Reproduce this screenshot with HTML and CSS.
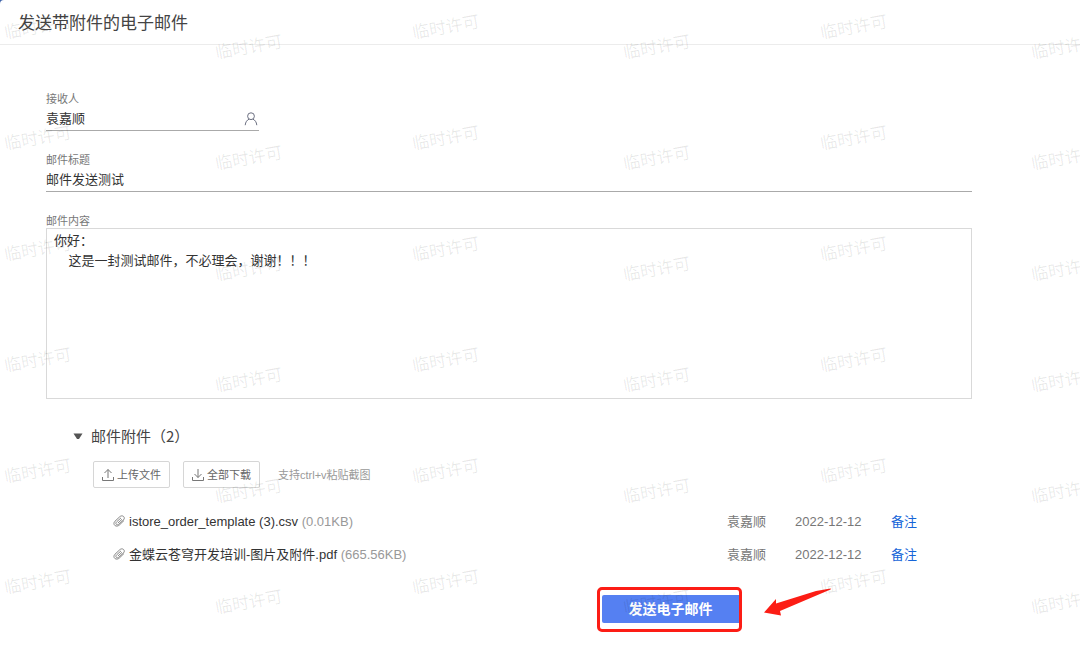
FILE: index.html
```html
<!DOCTYPE html>
<html lang="zh-CN">
<head>
<meta charset="utf-8">
<meta name="viewport" content="width=device-width, initial-scale=1">
<title>发送带附件的电子邮件</title>
<link rel="stylesheet" href="styles.css">
</head>
<body>
<div class="page">
  <header class="header"><h1 class="title">发送带附件的电子邮件</h1></header>
  <form class="form">
    <div class="field field-short">
      <label class="label" for="to">接收人</label>
      <div class="control">
        <input class="input" id="to" type="text" value="袁嘉顺">
        <svg class="person" viewBox="0 0 14 14" aria-hidden="true"><circle cx="7" cy="4.2" r="3.4"/><path d="M1.200 13.200C1.500 10 3 8 5.200 7.100M12.800 13.200C12.500 10 11 8 8.800 7.100"/></svg>
      </div>
    </div>
    <div class="field">
      <label class="label" for="subject">邮件标题</label>
      <div class="control"><input class="input" id="subject" type="text" value="邮件发送测试"></div>
    </div>
    <div class="field">
      <label class="label" for="content">邮件内容</label>
      <textarea class="textarea" id="content">你好：
    这是一封测试邮件，不必理会，谢谢！！！</textarea>
    </div>
    <section class="attachments">
      <h2 class="section-title"><svg class="caret" viewBox="0 0 10 7" aria-hidden="true"><path d="M.5.500h9L6 6H4z"/></svg>邮件附件（2）</h2>
      <div class="toolbar">
        <button class="tool" type="button"><svg class="tool-icon" viewBox="0 0 14 14" aria-hidden="true"><path d="M7 10V1.500M3.500 5L7 1.500L10.500 5M1.500 9v3.500h11V9"/></svg>上传文件</button>
        <button class="tool" type="button"><svg class="tool-icon" viewBox="0 0 14 14" aria-hidden="true"><path d="M7 1v8.500M3.500 6L7 9.500L10.500 6M1.500 9v3.500h11V9"/></svg>全部下载</button>
        <span class="hint">支持ctrl+v粘贴截图</span>
      </div>
      <table class="files">
        <tbody>
          <tr>
            <td class="file"><svg class="clip" viewBox="0 0 12 12" aria-hidden="true"><path d="M11 5.500L6.500 9.900C5.100 11.200 3.200 11.600 1.800 10.400C.500 9.200.7 7.500 2 6.200L6.800 1.700C7.900.700 9.600.500 10.600 1.500C11.600 2.500 11.500 3.900 10.500 4.900L5.900 9.200C5.100 9.900 4 10 3.300 9.300C2.600 8.600 2.800 7.600 3.600 6.900L8 2.900M4.900 8.100L9 4.300"/></svg>istore_order_template (3).csv <span class="size">(0.01KB)</span></td>
            <td class="owner">袁嘉顺</td><td class="date">2022-12-12</td><td class="action"><a class="link" href="#">备注</a></td>
          </tr>
          <tr>
            <td class="file"><svg class="clip" viewBox="0 0 12 12" aria-hidden="true"><path d="M11 5.500L6.500 9.900C5.100 11.200 3.200 11.600 1.800 10.400C.500 9.200.7 7.500 2 6.200L6.800 1.700C7.900.700 9.600.500 10.600 1.500C11.600 2.500 11.500 3.900 10.500 4.900L5.900 9.200C5.100 9.900 4 10 3.300 9.300C2.600 8.600 2.800 7.600 3.600 6.900L8 2.900M4.900 8.100L9 4.300"/></svg>金蝶云苍穹开发培训-图片及附件.pdf <span class="size">(665.56KB)</span></td>
            <td class="owner">袁嘉顺</td><td class="date">2022-12-12</td><td class="action"><a class="link" href="#">备注</a></td>
          </tr>
        </tbody>
      </table>
    </section>
    <div class="submit-row">
      <div class="highlight"><button class="submit" type="button">发送电子邮件</button></div>
      <svg class="arrow" viewBox="0 0 68 30" aria-hidden="true"><path d="M0 25.500L12 12L12 16.500L52 4L66.500 1.500Q67.500 2 66.500 2.500L16 24L17 28.500z"/></svg>
    </div>
  </form>
  <div class="watermarks" aria-hidden="true">
    <span class="mark">临时许可</span><span class="mark">临时许可</span><span class="mark">临时许可</span><span class="mark">临时许可</span><span class="mark">临时许可</span><span class="mark">临时许可</span>
    <span class="mark">临时许可</span><span class="mark">临时许可</span><span class="mark">临时许可</span><span class="mark">临时许可</span><span class="mark">临时许可</span><span class="mark">临时许可</span>
    <span class="mark">临时许可</span><span class="mark">临时许可</span><span class="mark">临时许可</span><span class="mark">临时许可</span><span class="mark">临时许可</span><span class="mark">临时许可</span>
    <span class="mark">临时许可</span><span class="mark">临时许可</span><span class="mark">临时许可</span><span class="mark">临时许可</span><span class="mark">临时许可</span><span class="mark">临时许可</span>
    <span class="mark">临时许可</span><span class="mark">临时许可</span><span class="mark">临时许可</span><span class="mark">临时许可</span><span class="mark">临时许可</span><span class="mark">临时许可</span>
    <span class="mark">临时许可</span><span class="mark">临时许可</span><span class="mark">临时许可</span><span class="mark">临时许可</span><span class="mark">临时许可</span><span class="mark">临时许可</span>
  </div>
</div>
</body>
</html>
```
FILE: styles.css
```css
* { box-sizing: border-box; }
body {
  margin: 0;
  background: #3d62a8;
  color: #333;
  font: 400 13px/20px "Liberation Sans", "Noto Sans CJK SC", sans-serif;
}
button, input, textarea { font: inherit; color: inherit; }
.page {
  position: relative;
  min-height: 100vh;
  overflow: hidden;
  background: #fff;
  border-top-left-radius: 4px;
}
.header {
  padding: 12px 18px 8px;
  border-bottom: 1px solid #ececec;
}
.title { margin: 0; font-size: 17px; font-weight: 400; line-height: 24px; color: #444; }
.form { padding: 46px 108px 0 46px; }
.field { display: flex; flex-direction: column; margin-bottom: 21px; }
.field-short { width: 213px; }
.label { font-size: 11px; line-height: 16px; color: #777; }
.control {
  display: flex;
  align-items: center;
  height: 24px;
  border-bottom: 1px solid #aaa;
}
.input {
  flex: 1;
  min-width: 0;
  padding: 0;
  border: 0;
  outline: 0;
  background: none;
}
.person { width: 14px; height: 14px; margin-right: 1px; fill: none; stroke: #6b6f80; stroke-width: 1; }
.textarea {
  height: 171px;
  margin-top: -1px;
  padding: 2px 7px;
  border: 1px solid #d9d9d9;
  outline: 0;
  resize: none;
  background: none;
}
.attachments { padding: 4px 0 0 27px; }
.section-title {
  display: flex;
  align-items: center;
  gap: 8px;
  margin: 0;
  font-family: "Noto Sans CJK SC", sans-serif;
  font-size: 15px;
  font-weight: 400;
  line-height: 24px;
  color: #444;
}
.caret { width: 10px; height: 7px; fill: #555; }
.toolbar { display: flex; align-items: center; gap: 13px; margin: 13px 0 17px 20px; }
.tool {
  display: flex;
  align-items: center;
  gap: 2px;
  height: 27px;
  padding: 0 8px 0 7px;
  border: 1px solid #d6d6d6;
  border-radius: 2px;
  background: none;
  font-size: 11px;
  color: #666;
}
.tool-icon { width: 14px; height: 14px; fill: none; stroke: #777; stroke-width: 1; }
.hint { padding-left: 5px; font-size: 11px; color: #999; }
.files { width: 100%; border-collapse: collapse; }
.files td { height: 33px; padding: 0; white-space: nowrap; color: #777; }
.files .file { padding-left: 40px; color: #333; }
.clip { width: 12px; height: 12px; margin-right: 4px; vertical-align: -1px; fill: none; stroke: #888; stroke-width: 1; }
.files .size { color: #999; }
.owner { width: 68px; }
.date { width: 96px; }
.action { width: 81px; }
.link { color: #1665d8; text-decoration: none; }
.submit-row { display: flex; justify-content: flex-end; align-items: flex-start; gap: 22px; padding: 16px 140px 16px 0; }
.highlight { padding: 5px 0 6px 2px; border: 3px solid #fc1d15; border-radius: 5px; }
.submit {
  display: block;
  width: 137px;
  height: 28px;
  padding: 0;
  border: 0;
  border-radius: 2px 0 0 2px;
  background: #5580f2;
  color: #fff;
  font-size: 14px;
  font-weight: 700;
}
.arrow { width: 68px; height: 30px; fill: #fc1d15; }
.watermarks {
  position: absolute;
  inset: 0;
  display: grid;
  grid-template-columns: 211px 197px 211px 197px 211px 197px;
  grid-auto-rows: 111px;
  padding: 16px 0 0 4px;
  overflow: hidden;
  pointer-events: none;
}
.mark {
  justify-self: start;
  align-self: start;
  font-size: 17px;
  line-height: 24px;
  color: rgba(0, 0, 0, .09);
  transform: rotate(-10deg);
}
.mark:nth-child(even) { margin-top: 20px; }
```
